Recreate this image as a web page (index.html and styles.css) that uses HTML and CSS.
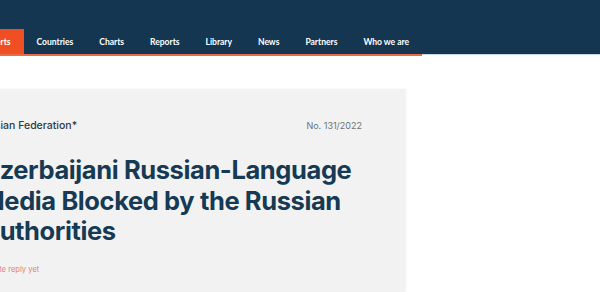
FILE: index.html
```html
<!DOCTYPE html>
<html lang="en">
<head>
<meta charset="utf-8">
<title>Azerbaijani Russian-Language Media Blocked by the Russian Authorities</title>
<link rel="stylesheet" href="styles.css">
</head>
<body>
<header class="site-header">
  <div class="page">
    <nav class="main-nav">
      <a class="nav-item active" href="#">Alerts</a>
      <a class="nav-item" href="#">Countries</a>
      <a class="nav-item" href="#">Charts</a>
      <a class="nav-item" href="#">Reports</a>
      <a class="nav-item" href="#">Library</a>
      <a class="nav-item" href="#">News</a>
      <a class="nav-item" href="#">Partners</a>
      <a class="nav-item" href="#">Who we are</a>
    </nav>
  </div>
</header>
<main class="page">
  <article class="alert-card">
    <div class="alert-meta">
      <span class="alert-country">Russian Federation*</span>
      <span class="alert-number">No. 131/2022</span>
    </div>
    <h1 class="alert-title">Azerbaijani Russian-Language Media Blocked by the Russian Authorities</h1>
    <p class="alert-reply">No state reply yet</p>
  </article>
</main>
</body>
</html>
```
FILE: styles.css
```css
html, body {
  margin: 0;
  padding: 0;
  background: #ffffff;
  overflow: hidden;
}
body {
  font-family: Inter, "Noto Sans", sans-serif;
  width: 600px;
  height: 292px;
}
.page {
  margin-left: -61px;
}
.site-header {
  background: #143651;
  height: 54px;
  border-bottom: 1px solid #c9d8e6;
  display: flex;
  flex-direction: column;
  justify-content: flex-end;
}
.main-nav {
  display: flex;
  width: fit-content;
  margin-left: 36px;
  border-bottom: 2px solid #ea6a4a;
  margin-bottom: -2px;
}
.nav-item {
  display: flex;
  align-items: center;
  height: 25px;
  padding: 0 13px;
  color: #ffffff;
  text-decoration: none;
  font-family: Lato, "Noto Sans", sans-serif;
  font-weight: 700;
  font-size: 8.6px;
  letter-spacing: -0.05px;
}
.nav-item.active {
  background: #f04e23;
}
.alert-card {
  margin-top: 34px;
  width: 466px;
  height: 203px;
  box-sizing: border-box;
  background: #f2f2f2;
  padding: 30px 43px 0 37px;
  box-shadow: 1px 0 2px rgba(0,0,0,0.06);
}
.alert-meta {
  display: flex;
  justify-content: space-between;
  align-items: center;
  height: 13px;
}
.alert-country {
  font-size: 10.5px;
  font-weight: 500;
  color: #2f3a44;
}
.alert-number {
  font-size: 9px;
  color: #6f7276;
}
.alert-title {
  margin: 23px -35px 0 5px;
  font-size: 25.5px;
  line-height: 30.5px;
  font-weight: 700;
  color: #163a54;
  letter-spacing: -0.4px;
}
.alert-reply {
  margin: 18px 0 0;
  font-size: 7.6px;
  line-height: 10px;
  color: #e57f72;
}
```
